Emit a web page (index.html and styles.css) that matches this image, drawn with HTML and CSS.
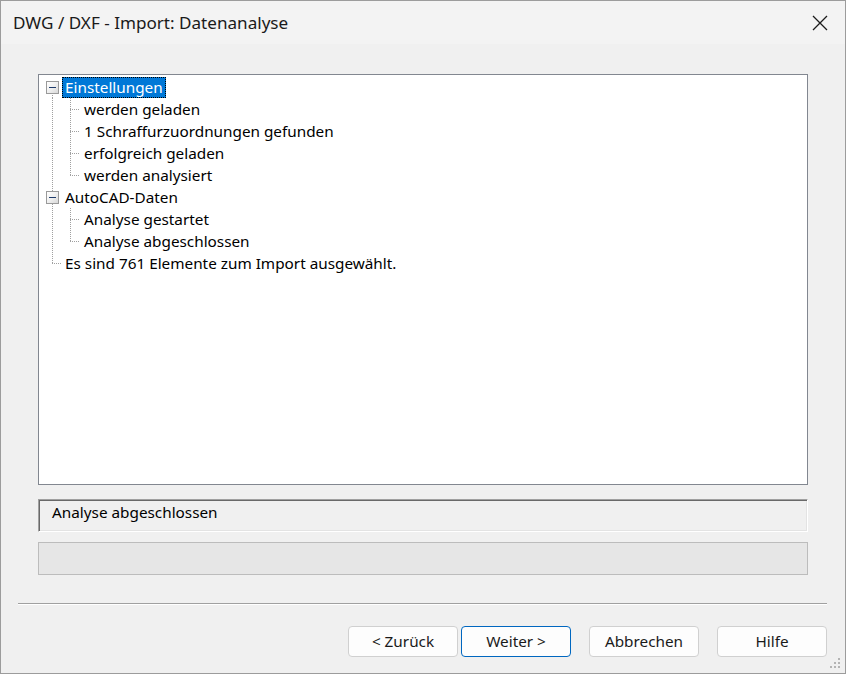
FILE: index.html
```html
<!DOCTYPE html>
<html lang="de">
<head>
<meta charset="utf-8">
<title>DWG / DXF - Import: Datenanalyse</title>
<link rel="stylesheet" href="styles.css">
</head>
<body>
<div class="window">
  <div class="titlebar">
    <span class="title">DWG / DXF - Import: Datenanalyse</span>
    <svg class="close" width="16" height="16" viewBox="0 0 16 16"><path d="M1 1L15 15M15 1L1 15" stroke="#1b1b1b" stroke-width="1.3" fill="none"/></svg>
  </div>
  <div class="body">
    <div class="content">
      <div class="tree">
        <div class="row">
          <span class="col1 lower"><span class="box"></span></span>
          <span class="label selected">Einstellungen</span>
        </div>
        <div class="row">
          <span class="col1 pipe"></span><span class="col2 tee"></span>
          <span class="label">werden geladen</span>
        </div>
        <div class="row">
          <span class="col1 pipe"></span><span class="col2 tee"></span>
          <span class="label">1 Schraffurzuordnungen gefunden</span>
        </div>
        <div class="row">
          <span class="col1 pipe"></span><span class="col2 tee"></span>
          <span class="label">erfolgreich geladen</span>
        </div>
        <div class="row">
          <span class="col1 pipe"></span><span class="col2 elbow"></span>
          <span class="label">werden analysiert</span>
        </div>
        <div class="row">
          <span class="col1 pipe"><span class="box"></span></span>
          <span class="label">AutoCAD-Daten</span>
        </div>
        <div class="row">
          <span class="col1 pipe"></span><span class="col2 tee"></span>
          <span class="label">Analyse gestartet</span>
        </div>
        <div class="row">
          <span class="col1 pipe"></span><span class="col2 elbow"></span>
          <span class="label">Analyse abgeschlossen</span>
        </div>
        <div class="row">
          <span class="col1 elbow1"></span>
          <span class="label">Es sind 761 Elemente zum Import ausgewählt.</span>
        </div>
      </div>
      <div class="status">Analyse abgeschlossen</div>
      <div class="progress"></div>
    </div>
    <div class="separator"></div>
    <div class="buttons">
      <button class="btn">&lt; Zurück</button>
      <button class="btn default">Weiter &gt;</button>
      <button class="btn gap">Abbrechen</button>
      <button class="btn gap">Hilfe</button>
    </div>
    <svg class="grip" width="12" height="12" viewBox="0 0 12 12" fill="#b4b4b4">
      <rect x="8" y="0" width="2" height="2"/>
      <rect x="4" y="4" width="2" height="2"/><rect x="8" y="4" width="2" height="2"/>
      <rect x="0" y="8" width="2" height="2"/><rect x="4" y="8" width="2" height="2"/><rect x="8" y="8" width="2" height="2"/>
    </svg>
  </div>
</div>
</body>
</html>
```
FILE: styles.css
```css
html, body {
  margin: 0;
  padding: 0;
  background: #f0f0f0;
}
.window {
  width: 846px;
  height: 674px;
  box-sizing: border-box;
  border: 1px solid #9c9c9c;
  display: flex;
  flex-direction: column;
  font-family: "Noto Sans", "Liberation Sans", Arial, sans-serif;
  color: #000;
  background: #f0f0f0;
  position: relative;
}
.titlebar {
  height: 43px;
  background: #f3f3f3;
  display: flex;
  align-items: center;
  padding: 0 17px 0 12px;
  justify-content: space-between;
}
.title {
  font-size: 17.1px;
  color: #1a1a1a;
  padding-bottom: 1px;
}
.close {
  margin-top: 1px;
}
.body {
  flex: 1;
  display: flex;
  flex-direction: column;
  position: relative;
}
.content {
  padding: 30px 37px 0 37px;
  display: flex;
  flex-direction: column;
}
.tree {
  height: 411px;
  box-sizing: border-box;
  border: 1px solid #828790;
  background: #fff;
  padding-top: 1px;
  font-size: 15.3px;
}
.row {
  height: 22px;
  display: flex;
  align-items: stretch;
}
.col1, .col2 {
  display: flex;
  align-items: center;
  background-repeat: no-repeat;
}
.col1 { width: 23px; }
.col2 { width: 19px; }
.pipe {
  background-image: repeating-linear-gradient(to bottom, #a0a0a0 0 1px, transparent 1px 2px);
  background-size: 1px 100%;
  background-position: 13px 0;
}
.lower {
  background-image: repeating-linear-gradient(to bottom, #a0a0a0 0 1px, transparent 1px 2px);
  background-size: 1px 50%;
  background-position: 13px 100%;
}
.tee {
  background-image:
    repeating-linear-gradient(to bottom, #a0a0a0 0 1px, transparent 1px 2px),
    repeating-linear-gradient(to right, #a0a0a0 0 1px, transparent 1px 2px);
  background-size: 1px 100%, 10px 1px;
  background-position: 8px 0, 8px 11px;
}
.elbow {
  background-image:
    repeating-linear-gradient(to bottom, #a0a0a0 0 1px, transparent 1px 2px),
    repeating-linear-gradient(to right, #a0a0a0 0 1px, transparent 1px 2px);
  background-size: 1px 12px, 10px 1px;
  background-position: 8px 0, 8px 11px;
}
.elbow1 {
  background-image:
    repeating-linear-gradient(to bottom, #a0a0a0 0 1px, transparent 1px 2px),
    repeating-linear-gradient(to right, #a0a0a0 0 1px, transparent 1px 2px);
  background-size: 1px 12px, 10px 1px;
  background-position: 13px 0, 13px 11px;
}
.box {
  width: 13px;
  height: 13px;
  box-sizing: border-box;
  margin-left: 7px;
  margin-top: 1px;
  border: 1px solid #9a9a9a;
  background: linear-gradient(135deg, #ffffff 0%, #f0f0f0 50%, #d8d8d8 100%);
  display: flex;
  align-items: center;
  justify-content: center;
}
.box::before {
  content: "";
  width: 7px;
  height: 1px;
  background: #1f3b6b;
}
.label {
  display: flex;
  align-items: center;
  padding: 0 3px 1px 3px;
  white-space: nowrap;
}
.selected {
  background: #0078d7;
  color: #fff;
  outline: 1px dotted #000;
  outline-offset: -1px;
  margin: 1px 0 0 0;
}
.status {
  margin-top: 14px;
  height: 33px;
  box-sizing: border-box;
  border: 1px solid;
  border-color: #a0a0a0 #ffffff #ffffff #a0a0a0;
  box-shadow: inset 1px 1px 0 #696969, inset -1px -1px 0 #e3e3e3;
  background: #f0f0f0;
  font-size: 15.3px;
  line-height: 20px;
  padding: 2px 0 0 13px;
}
.progress {
  margin-top: 10px;
  height: 33px;
  box-sizing: border-box;
  border: 1px solid #bcbcbc;
  background: #e6e6e6;
}
.separator {
  margin: 28px 18px 0 17px;
  height: 1px;
  background: #a0a0a0;
  border-bottom: 1px solid #ffffff;
}
.buttons {
  display: flex;
  justify-content: flex-end;
  padding: 21px 18px 0 0;
  gap: 3px;
}
.btn {
  width: 110px;
  height: 31px;
  box-sizing: border-box;
  background: #fdfdfd;
  border: 1px solid #d0d0d0;
  border-radius: 4px;
  font-family: "Noto Sans", "Liberation Sans", Arial, sans-serif;
  font-size: 15.3px;
  color: #1a1a1a;
  padding: 0 0 1px 0;
}
.btn.default {
  border-color: #0067c0;
}
.btn.gap {
  margin-left: 15px;
}
.grip {
  position: absolute;
  right: 3px;
  bottom: 3px;
}
```
